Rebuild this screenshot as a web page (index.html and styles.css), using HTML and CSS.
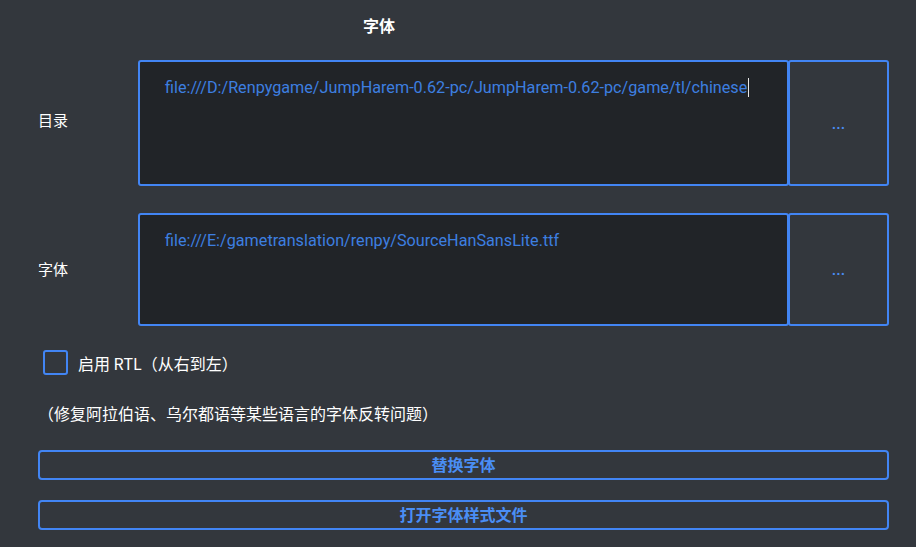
FILE: index.html
```html
<!DOCTYPE html>
<html lang="zh">
<head>
<meta charset="utf-8">
<link rel="stylesheet" href="styles.css">
</head>
<body>
<div class="page">
  <div class="title">字体</div>
  <div class="row row-dir">
    <div class="label">目录</div>
    <div class="field"><span class="path">file:///D:/Renpygame/JumpHarem-0.62-pc/JumpHarem-0.62-pc/game/tl/chinese</span><span class="caret"></span></div>
    <div class="browse">...</div>
  </div>
  <div class="row row-font">
    <div class="label">字体</div>
    <div class="field"><span class="path">file:///E:/gametranslation/renpy/SourceHanSansLite.ttf</span></div>
    <div class="browse">...</div>
  </div>
  <div class="check-row">
    <span class="checkbox"></span>
    <span class="check-label">启用 RTL（从右到左）</span>
  </div>
  <div class="note">（修复阿拉伯语、乌尔都语等某些语言的字体反转问题）</div>
  <div class="action">替换字体</div>
  <div class="action action-second">打开字体样式文件</div>
</div>
</body>
</html>
```

FILE: styles.css
```css
html, body {
  margin: 0;
  padding: 0;
  background: #33373d;
  width: 916px;
  height: 547px;
  overflow: hidden;
}
.page {
  font-family: "Noto Sans CJK SC", "Noto Sans", sans-serif;
  color: #ffffff;
  display: flex;
  flex-direction: column;
}
.title {
  height: 50px;
  line-height: 50px;
  padding-left: 363px;
  font-size: 16px;
  font-weight: bold;
  box-sizing: border-box;
}
.row {
  display: grid;
  grid-template-columns: 100px 651px 100px;
  margin-left: 38px;
}
.row-dir {
  margin-top: 10px;
  height: 126px;
}
.row-font {
  margin-top: 27px;
  height: 113px;
}
.label {
  display: flex;
  align-items: center;
  font-size: 15px;
  padding-bottom: 8px;
}
.row-font .label {
  padding-bottom: 2px;
}
.field {
  background: #212428;
  border: 2px solid #4285f4;
  border-radius: 3px;
  padding: 17px 0 0 25px;
  font-family: Roboto, "Noto Sans", sans-serif;
  font-size: 16.2px;
  line-height: 18px;
  color: #3d7fe0;
  display: flex;
  align-items: flex-start;
}
.caret {
  display: inline-block;
  width: 1px;
  height: 19px;
  background: #e8e8e8;
  margin-left: 1px;
  margin-top: -1px;
}
.browse {
  border: 2px solid #4285f4;
  border-radius: 3px;
  display: flex;
  align-items: center;
  justify-content: center;
  color: #4a8ef5;
  font-family: Roboto, sans-serif;
  font-size: 16px;
  font-weight: 500;
  margin-left: -1px;
}
.check-row {
  display: flex;
  align-items: center;
  margin-top: 24px;
  margin-left: 43px;
  height: 25px;
}
.checkbox {
  width: 21px;
  height: 21px;
  border: 2px solid #4285f4;
  border-radius: 3px;
  box-sizing: content-box;
}
.check-label {
  margin-left: 10px;
  font-size: 16px;
}
.note {
  margin-top: 26px;
  margin-left: 38px;
  font-size: 16px;
  line-height: 24px;
}
.action {
  margin-left: 38px;
  width: 851px;
  height: 30px;
  box-sizing: border-box;
  border: 2px solid #4285f4;
  border-radius: 4px;
  display: flex;
  align-items: center;
  justify-content: center;
  color: #4a8ef5;
  font-size: 16px;
  font-weight: bold;
  margin-top: 25px;
  padding-bottom: 2px;
}
.action-second {
  margin-top: 20px;
}
```
